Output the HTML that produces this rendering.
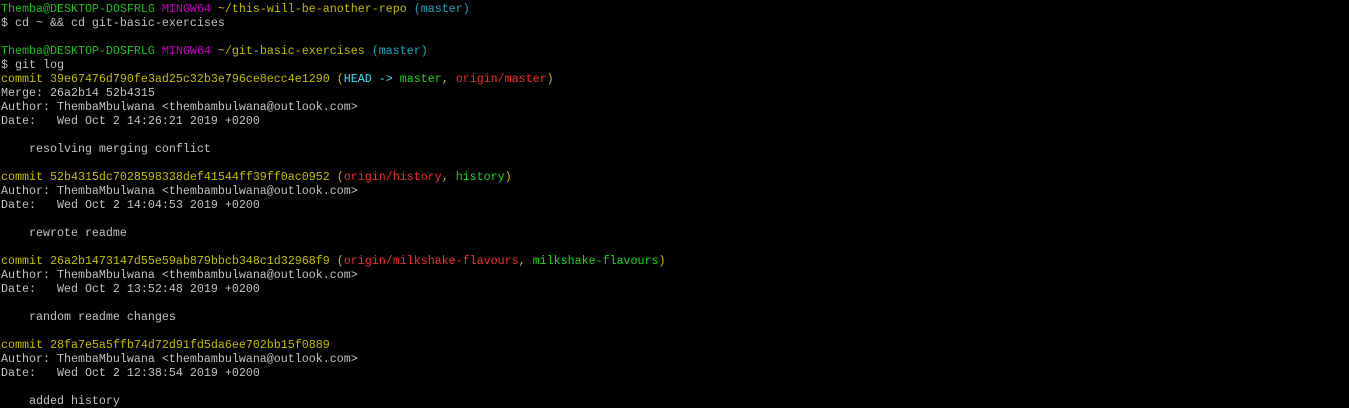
<!DOCTYPE html>
<html><head><style>
html,body{margin:0;background:#000;width:1349px;height:408px;overflow:hidden}
pre{margin:0;padding:2px 0 0 1px;font-family:"Liberation Mono",monospace;font-size:11.67px;line-height:14px;color:#c0c0c0;white-space:pre}
.g{color:#1cc01c}.m{color:#c000c0}.y{color:#bfbf00}.c{color:#1fa6b8}.hc{color:#3fe0f0}.bg{color:#1cd81c}.r{color:#f03030}
</style></head><body><pre><span class="g">Themba@DESKTOP-DOSFRLG</span> <span class="m">MINGW64</span> <span class="y">~/this-will-be-another-repo</span> <span class="c">(master)</span>
$ cd ~ &amp;&amp; cd git-basic-exercises

<span class="g">Themba@DESKTOP-DOSFRLG</span> <span class="m">MINGW64</span> <span class="y">~/git-basic-exercises</span> <span class="c">(master)</span>
$ git log
<span class="y">commit 39e67476d790fe3ad25c32b3e796ce8ecc4e1290 (</span><span class="hc">HEAD -&gt; </span><span class="bg">master</span><span class="y">, </span><span class="r">origin/master</span><span class="y">)</span>
Merge: 26a2b14 52b4315
Author: ThembaMbulwana &lt;thembambulwana@outlook.com&gt;
Date:   Wed Oct 2 14:26:21 2019 +0200

    resolving merging conflict

<span class="y">commit 52b4315dc7028598338def41544ff39ff0ac0952 (</span><span class="r">origin/history</span><span class="y">, </span><span class="bg">history</span><span class="y">)</span>
Author: ThembaMbulwana &lt;thembambulwana@outlook.com&gt;
Date:   Wed Oct 2 14:04:53 2019 +0200

    rewrote readme

<span class="y">commit 26a2b1473147d55e59ab879bbcb348c1d32968f9 (</span><span class="r">origin/milkshake-flavours</span><span class="y">, </span><span class="bg">milkshake-flavours</span><span class="y">)</span>
Author: ThembaMbulwana &lt;thembambulwana@outlook.com&gt;
Date:   Wed Oct 2 13:52:48 2019 +0200

    random readme changes

<span class="y">commit 28fa7e5a5ffb74d72d91fd5da6ee702bb15f0889</span>
Author: ThembaMbulwana &lt;thembambulwana@outlook.com&gt;
Date:   Wed Oct 2 12:38:54 2019 +0200

    added history
</pre></body></html>
